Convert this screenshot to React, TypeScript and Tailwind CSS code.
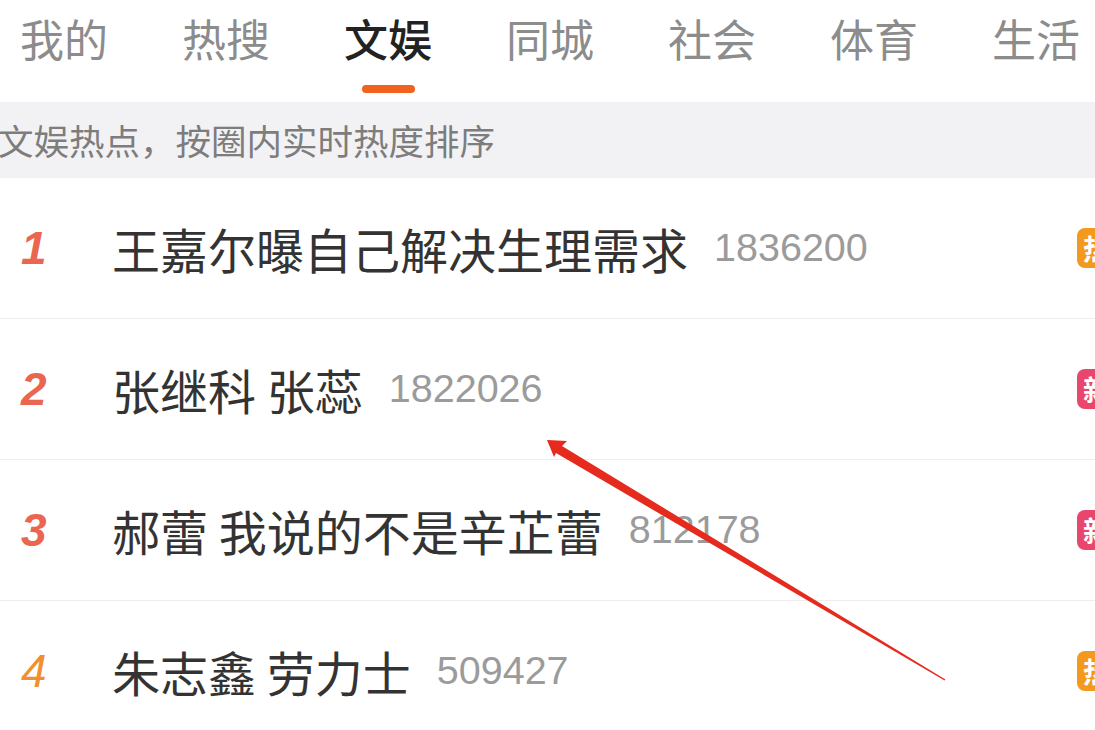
import React from 'react';

const tabs = ['我的', '热搜', '文娱', '同城', '社会', '体育', '生活'];

type Item = { rank: number; title: string; count: string; tag: '热' | '新' };

const items: Item[] = [
  { rank: 1, title: '王嘉尔曝自己解决生理需求', count: '1836200', tag: '热' },
  { rank: 2, title: '张继科 张蕊', count: '1822026', tag: '新' },
  { rank: 3, title: '郝蕾 我说的不是辛芷蕾', count: '812178', tag: '新' },
  { rank: 4, title: '朱志鑫 劳力士', count: '509427', tag: '热' },
];

const cjk = { fontFamily: '"Noto Sans CJK SC", "Noto Sans", sans-serif' };

const Arrow = () => (
  <svg className="pointer-events-none absolute left-0 top-0" width="1095" height="730" viewBox="0 0 1095 730">
    <polygon
      points="547,440 567,441 562,446 945.4,679.4 944.6,680.6 556,453 554,457"
      fill="#e52b1d"
    />
  </svg>
);

export default function App() {
  return (
    <div className="relative h-[730px] w-[1095px] overflow-hidden bg-white" style={cjk}>
      {/* top tabs */}
      <div className="flex h-[102px] gap-[74px] pl-[20px]">
        {tabs.map((t) => {
          const active = t === '文娱';
          return (
            <div key={t} className="flex shrink-0 flex-col items-center">
              <div
                className={
                  'mt-[16px] whitespace-nowrap text-[44px] leading-[44px] ' +
                  (active ? 'font-medium text-[#222222]' : 'text-[#8c8c8c]')
                }
              >
                {t}
              </div>
              {active && <div className="mt-[25px] h-[8px] w-[53px] rounded-full bg-[#f2621f]" />}
            </div>
          );
        })}
      </div>

      {/* hint band */}
      <div className="flex h-[76px] items-center bg-[#f2f2f4]">
        <div className="ml-[-2px] whitespace-nowrap text-[35.5px] leading-none text-[#7d7d7d]">
          文娱热点，按圈内实时热度排序
        </div>
      </div>

      {/* list */}
      <div>
        {items.map((it) => (
          <div key={it.rank} className="flex h-[141px] items-center border-b border-[#ededed]">
            <div
              className={
                'w-[112px] shrink-0 pl-[21px] text-[46px] italic leading-none ' +
                (it.rank <= 3 ? 'font-black text-[#ea6651]' : 'font-normal text-[#f0912e]')
              }
              style={{ fontFamily: '"Liberation Sans", Arial, sans-serif' }}
            >
              {it.rank}
            </div>
            <div className="whitespace-nowrap text-[48px] leading-none text-[#333333]">{it.title}</div>
            <div
              className="ml-[26px] whitespace-nowrap text-[39.5px] leading-none text-[#9b9b9b]"
              style={{ fontFamily: '"Liberation Sans", Arial, sans-serif' }}
            >
              {it.count}
            </div>
            <div
              className={
                'ml-auto mr-[-22px] flex h-[40px] w-[40px] shrink-0 items-center justify-center rounded-[8px] text-[28px] font-bold leading-none text-white ' +
                (it.tag === '热' ? 'bg-[#f39a1e]' : 'bg-[#e8466c]')
              }
            >
              {it.tag}
            </div>
          </div>
        ))}
      </div>

      <Arrow />
    </div>
  );
}
